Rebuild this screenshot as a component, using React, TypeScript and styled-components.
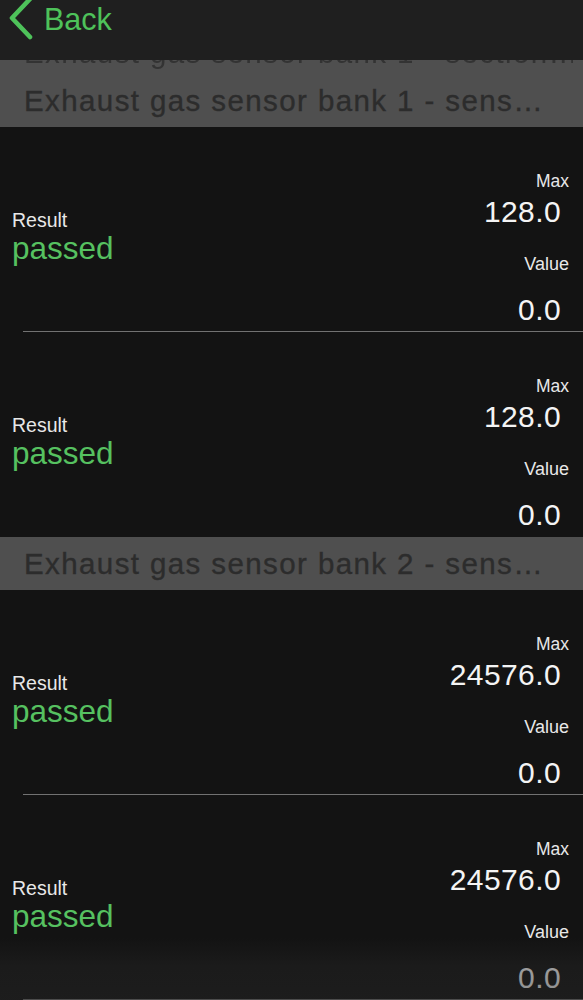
import React from "react";
import styled, { createGlobalStyle } from "styled-components";

const GlobalStyle = createGlobalStyle`
  html, body {
    margin: 0;
    padding: 0;
    background: #131313;
  }
  body {
    font-family: "Liberation Sans", Arial, sans-serif;
    overflow: hidden;
  }
  * { box-sizing: border-box; }
`;

const Screen = styled.div`
  position: relative;
  width: 583px;
  height: 1000px;
  overflow: hidden;
  background: #131313;
  display: flex;
  flex-direction: column;
`;

const NavBar = styled.div`
  height: 60px;
  flex: none;
  background: #1f1f1f;
  display: flex;
  align-items: flex-start;
`;

const BackButton = styled.div`
  display: flex;
  align-items: flex-start;
  gap: 8px;
  padding-left: 8px;
  color: #4ec25a;
`;

const Chevron = styled.svg`
  width: 28px;
  height: 42px;
  margin-top: -2px;
  flex: none;
`;

const BackLabel = styled.span`
  font-size: 30.5px;
  line-height: 34px;
  margin-top: 2px;
`;

const SectionHeader = styled.div`
  flex: none;
  background: #4f4f4f;
  color: #2c2c2c;
  font-size: 29.5px;
  letter-spacing: 1.4px;
  -webkit-text-stroke: 0.35px #2c2c2c;
  padding-left: 24px;
  padding-right: 10px;
`;

const GhostLine = styled.div`
  height: 14px;
  overflow: hidden;
  color: #333333;
  -webkit-text-stroke: 0;
`;

const GhostText = styled.div`
  line-height: 30px;
  white-space: nowrap;
  transform: translateY(-22px);
  filter: blur(0.7px);
`;

const HeaderTitle = styled.div`
  line-height: 53px;
  white-space: nowrap;
  overflow: hidden;
`;

const RowWrap = styled.div`
  flex: none;
  display: flex;
  flex-direction: column;
  height: 205px;
`;

const RowBody = styled.div`
  flex: 1;
  display: flex;
  justify-content: space-between;
  align-items: flex-start;
`;

const Separator = styled.div`
  height: 1px;
  margin-left: 23px;
  background: #727272;
  flex: none;
`;

const LeftCol = styled.div`
  padding-top: 82px;
  padding-left: 12px;
  display: flex;
  flex-direction: column;
`;

const ResultLabel = styled.div`
  font-size: 19.5px;
  line-height: 22px;
  color: #e8e8e8;
`;

const ResultValue = styled.div`
  font-size: 31.5px;
  line-height: 34px;
  color: #56c160;
`;

const RightCol = styled.div`
  padding-top: 44px;
  padding-right: 14px;
  display: flex;
  flex-direction: column;
  align-items: flex-end;
`;

const SmallLabel = styled.div<{ $gap?: number }>`
  font-size: ${(p) => (p.$gap ? 18 : 17.5)}px;
  line-height: 20px;
  color: #e8e8e8;
  margin-top: ${(p) => p.$gap ?? 0}px;
`;

const Number = styled.div<{ $gap: number }>`
  font-size: 30px;
  line-height: 34px;
  letter-spacing: 0.4px;
  color: #f4f4f4;
  margin-right: 8px;
  margin-top: ${(p) => p.$gap}px;
`;

const BottomFade = styled.div`
  position: absolute;
  left: 0;
  right: 0;
  bottom: 0;
  height: 62px;
  pointer-events: none;
  background: linear-gradient(
    to bottom,
    rgba(38, 38, 38, 0) 0%,
    rgba(38, 38, 38, 0.42) 45%,
    rgba(38, 38, 38, 0.5) 100%
  );
`;

type RowData = { max: string; value: string; separator: boolean };

const Row: React.FC<RowData> = ({ max, value, separator }) => (
  <RowWrap>
    <RowBody>
      <LeftCol>
        <ResultLabel>Result</ResultLabel>
        <ResultValue>passed</ResultValue>
      </LeftCol>
      <RightCol>
        <SmallLabel>Max</SmallLabel>
        <Number $gap={4}>{max}</Number>
        <SmallLabel $gap={25}>Value</SmallLabel>
        <Number $gap={19}>{value}</Number>
      </RightCol>
    </RowBody>
    {separator && <Separator />}
  </RowWrap>
);

export default function App() {
  return (
    <>
      <GlobalStyle />
      <Screen>
        <NavBar>
          <BackButton>
            <Chevron viewBox="0 0 28 42">
              <polyline
                points="22,1 4,20 22,39"
                fill="none"
                stroke="#4ec25a"
                strokeWidth="4.6"
                strokeLinecap="round"
                strokeLinejoin="round"
              />
            </Chevron>
            <BackLabel>Back</BackLabel>
          </BackButton>
        </NavBar>

        <SectionHeader>
          <GhostLine>
            <GhostText>Exhaust gas sensor bank 1 - section…</GhostText>
          </GhostLine>
          <HeaderTitle>Exhaust gas sensor bank 1 - sens…</HeaderTitle>
        </SectionHeader>
        <Row max="128.0" value="0.0" separator />
        <Row max="128.0" value="0.0" separator={false} />

        <SectionHeader>
          <HeaderTitle>Exhaust gas sensor bank 2 - sens…</HeaderTitle>
        </SectionHeader>
        <Row max="24576.0" value="0.0" separator />
        <Row max="24576.0" value="0.0" separator />

        <BottomFade />
      </Screen>
    </>
  );
}
